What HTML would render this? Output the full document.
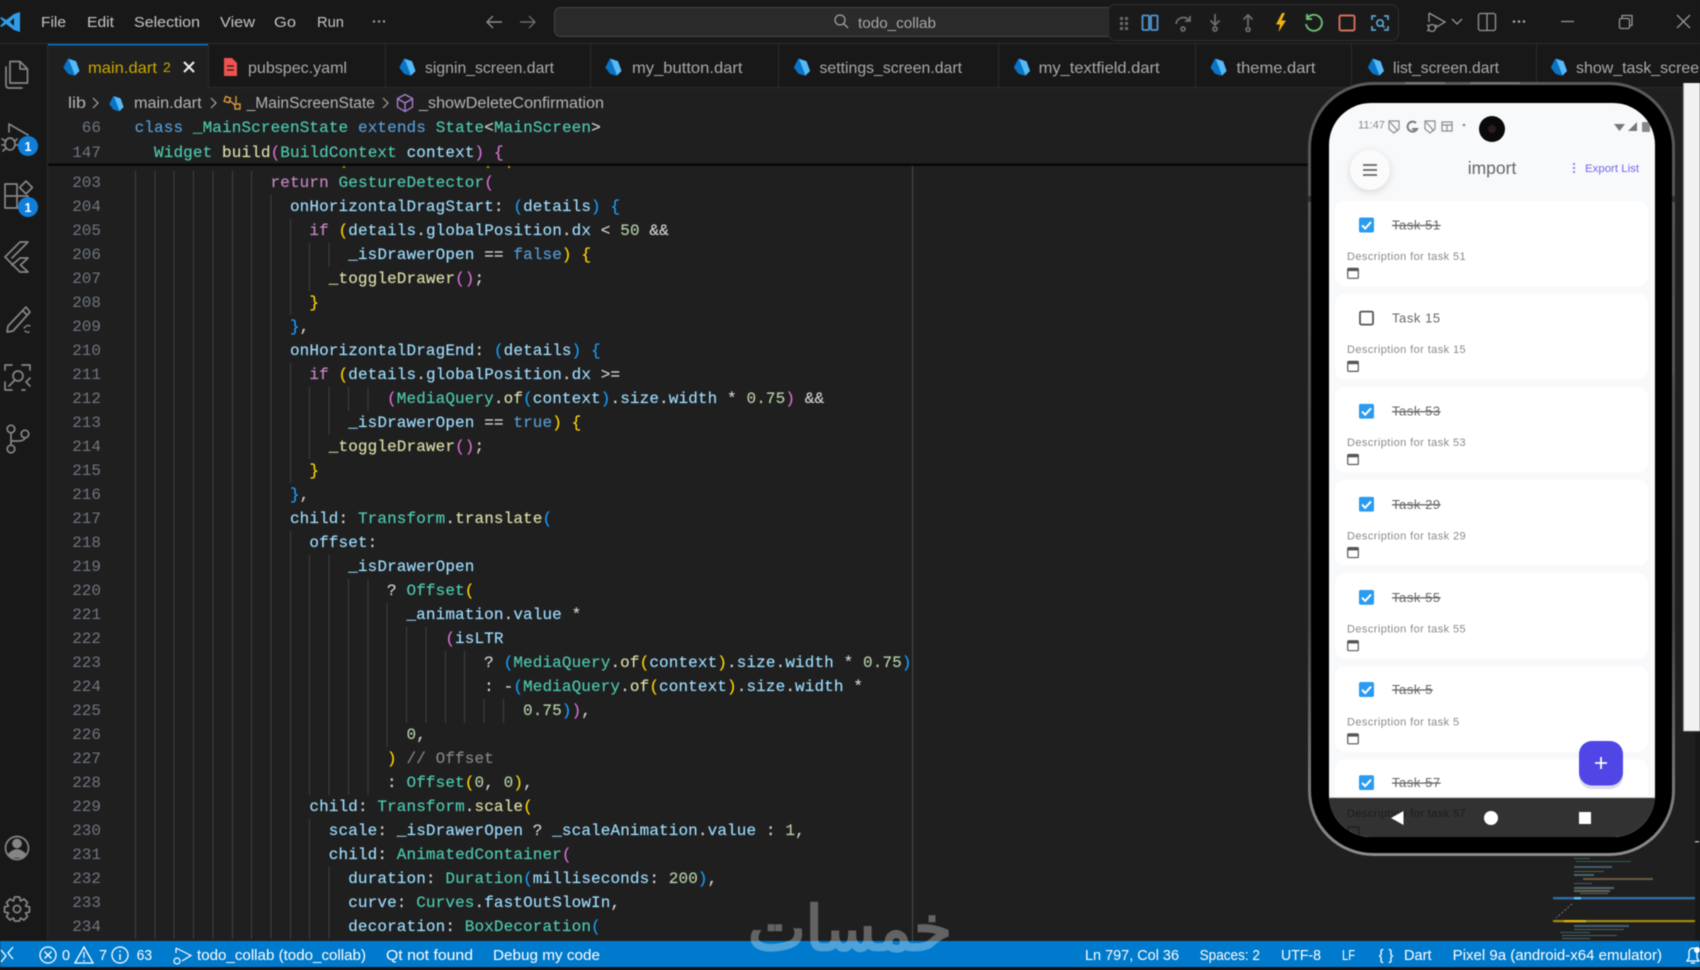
<!DOCTYPE html>
<html lang="en"><head><meta charset="utf-8"><title>todo_collab</title>
<style>
html,body{margin:0;padding:0;background:#1f1f1f;width:1700px;height:970px;overflow:hidden}
#w{position:relative;width:1700px;height:970px;overflow:hidden;filter:blur(.45px);background:#1f1f1f}
#code{position:absolute;left:0;top:166px;width:1700px;height:775px;overflow:hidden}
.l,.s{position:absolute;left:0;height:24px;line-height:24px;white-space:pre;font:16px/24px "Liberation Mono",monospace;letter-spacing:.11px;color:#ccc;width:1300px;-webkit-text-stroke:.15px}
.l b,.s b{font-weight:400;position:absolute;left:60px;width:41px;text-align:right;color:#6e7681;letter-spacing:0;-webkit-text-stroke:0}
.l i{position:absolute;left:134.6px;top:0;height:24px;width:calc(var(--c)*9.68px);background:repeating-linear-gradient(90deg,#3f3f3f 0 1px,transparent 1px 19.36px)}
.l u,.s u{text-decoration:none;position:absolute;top:0;left:calc(134.6px + var(--c)*9.71px)}
.k{color:#c586c0}.d{color:#569cd6}.t{color:#4ec9b0}.v{color:#9cdcfe}.f{color:#dcdcaa}.n{color:#b5cea8}.g{color:#ffd700}.p{color:#da70d6}.a{color:#179fff}.o{color:#d4d4d4}.c{color:#858585}
svg{position:absolute;left:0;top:0}
svg text{font-family:"Liberation Sans",sans-serif}
.m{font-size:15px;fill:#c4c4c4}
.tb{font-size:16px;fill:#a9a9a9}
.bc{font-size:15.5px;fill:#b4b4b4}
.st{font-size:14.5px;fill:#fff}
.ti{font-size:13px;fill:#666;letter-spacing:.55px}
.de{font-size:11px;fill:#8a8a8a;letter-spacing:.42px}
</style></head><body><div id="w">

<div class="s" style="top:116px;--c:0"><b>66</b><u><span class="d">class</span> <span class="t">_MainScreenState</span> <span class="d">extends</span> <span class="t">State</span><span class="o">&lt;</span><span class="t">MainScreen</span><span class="o">&gt;</span></u></div>
<div class="s" style="top:141px;--c:2"><b>147</b><u><span class="t">Widget</span> <span class="f">build</span><span class="p">(</span><span class="t">BuildContext</span> <span class="v">context</span><span class="p">)</span> <span class="p">{</span></u></div>

<div id="code">
<div class="l" style="top:4.7px;--c:14"><b>203</b><i></i><u><span class="k">return</span> <span class="t">GestureDetector</span><span class="p">(</span></u></div>
<div class="l" style="top:28.7px;--c:16"><b>204</b><i></i><u><span class="v">onHorizontalDragStart</span><span class="o">:</span> <span class="a">(</span><span class="v">details</span><span class="a">)</span> <span class="a">{</span></u></div>
<div class="l" style="top:52.7px;--c:18"><b>205</b><i></i><u><span class="k">if</span> <span class="g">(</span><span class="v">details</span><span class="o">.</span><span class="v">globalPosition</span><span class="o">.</span><span class="v">dx</span> <span class="o">&lt;</span> <span class="n">50</span> <span class="o">&amp;&amp;</span></u></div>
<div class="l" style="top:76.7px;--c:22"><b>206</b><i></i><u><span class="v">_isDrawerOpen</span> <span class="o">==</span> <span class="d">false</span><span class="g">)</span> <span class="g">{</span></u></div>
<div class="l" style="top:100.7px;--c:20"><b>207</b><i></i><u><span class="f">_toggleDrawer</span><span class="p">()</span><span class="o">;</span></u></div>
<div class="l" style="top:124.7px;--c:18"><b>208</b><i></i><u><span class="g">}</span></u></div>
<div class="l" style="top:148.7px;--c:16"><b>209</b><i></i><u><span class="a">}</span><span class="o">,</span></u></div>
<div class="l" style="top:172.7px;--c:16"><b>210</b><i></i><u><span class="v">onHorizontalDragEnd</span><span class="o">:</span> <span class="a">(</span><span class="v">details</span><span class="a">)</span> <span class="a">{</span></u></div>
<div class="l" style="top:196.7px;--c:18"><b>211</b><i></i><u><span class="k">if</span> <span class="g">(</span><span class="v">details</span><span class="o">.</span><span class="v">globalPosition</span><span class="o">.</span><span class="v">dx</span> <span class="o">&gt;=</span></u></div>
<div class="l" style="top:220.7px;--c:26"><b>212</b><i></i><u><span class="p">(</span><span class="t">MediaQuery</span><span class="o">.</span><span class="f">of</span><span class="a">(</span><span class="v">context</span><span class="a">)</span><span class="o">.</span><span class="v">size</span><span class="o">.</span><span class="v">width</span> <span class="o">*</span> <span class="n">0.75</span><span class="p">)</span> <span class="o">&amp;&amp;</span></u></div>
<div class="l" style="top:244.7px;--c:22"><b>213</b><i></i><u><span class="v">_isDrawerOpen</span> <span class="o">==</span> <span class="d">true</span><span class="g">)</span> <span class="g">{</span></u></div>
<div class="l" style="top:268.7px;--c:20"><b>214</b><i></i><u><span class="f">_toggleDrawer</span><span class="p">()</span><span class="o">;</span></u></div>
<div class="l" style="top:292.7px;--c:18"><b>215</b><i></i><u><span class="g">}</span></u></div>
<div class="l" style="top:316.7px;--c:16"><b>216</b><i></i><u><span class="a">}</span><span class="o">,</span></u></div>
<div class="l" style="top:340.7px;--c:16"><b>217</b><i></i><u><span class="v">child</span><span class="o">:</span> <span class="t">Transform</span><span class="o">.</span><span class="f">translate</span><span class="a">(</span></u></div>
<div class="l" style="top:364.7px;--c:18"><b>218</b><i></i><u><span class="v">offset</span><span class="o">:</span></u></div>
<div class="l" style="top:388.7px;--c:22"><b>219</b><i></i><u><span class="v">_isDrawerOpen</span></u></div>
<div class="l" style="top:412.7px;--c:26"><b>220</b><i></i><u><span class="o">?</span> <span class="t">Offset</span><span class="g">(</span></u></div>
<div class="l" style="top:436.7px;--c:28"><b>221</b><i></i><u><span class="v">_animation</span><span class="o">.</span><span class="v">value</span> <span class="o">*</span></u></div>
<div class="l" style="top:460.7px;--c:32"><b>222</b><i></i><u><span class="p">(</span><span class="v">isLTR</span></u></div>
<div class="l" style="top:484.7px;--c:36"><b>223</b><i></i><u><span class="o">?</span> <span class="a">(</span><span class="t">MediaQuery</span><span class="o">.</span><span class="f">of</span><span class="g">(</span><span class="v">context</span><span class="g">)</span><span class="o">.</span><span class="v">size</span><span class="o">.</span><span class="v">width</span> <span class="o">*</span> <span class="n">0.75</span><span class="a">)</span></u></div>
<div class="l" style="top:508.7px;--c:36"><b>224</b><i></i><u><span class="o">:</span> <span class="o">-</span><span class="a">(</span><span class="t">MediaQuery</span><span class="o">.</span><span class="f">of</span><span class="g">(</span><span class="v">context</span><span class="g">)</span><span class="o">.</span><span class="v">size</span><span class="o">.</span><span class="v">width</span> <span class="o">*</span></u></div>
<div class="l" style="top:532.7px;--c:40"><b>225</b><i></i><u><span class="n">0.75</span><span class="a">)</span><span class="p">)</span><span class="o">,</span></u></div>
<div class="l" style="top:556.7px;--c:28"><b>226</b><i></i><u><span class="n">0</span><span class="o">,</span></u></div>
<div class="l" style="top:580.7px;--c:26"><b>227</b><i></i><u><span class="g">)</span> <span class="c">// Offset</span></u></div>
<div class="l" style="top:604.7px;--c:26"><b>228</b><i></i><u><span class="o">:</span> <span class="t">Offset</span><span class="g">(</span><span class="n">0</span><span class="o">,</span> <span class="n">0</span><span class="g">)</span><span class="o">,</span></u></div>
<div class="l" style="top:628.7px;--c:18"><b>229</b><i></i><u><span class="v">child</span><span class="o">:</span> <span class="t">Transform</span><span class="o">.</span><span class="f">scale</span><span class="g">(</span></u></div>
<div class="l" style="top:652.7px;--c:20"><b>230</b><i></i><u><span class="v">scale</span><span class="o">:</span> <span class="v">_isDrawerOpen</span> <span class="o">?</span> <span class="v">_scaleAnimation</span><span class="o">.</span><span class="v">value</span> <span class="o">:</span> <span class="n">1</span><span class="o">,</span></u></div>
<div class="l" style="top:676.7px;--c:20"><b>231</b><i></i><u><span class="v">child</span><span class="o">:</span> <span class="t">AnimatedContainer</span><span class="p">(</span></u></div>
<div class="l" style="top:700.7px;--c:22"><b>232</b><i></i><u><span class="v">duration</span><span class="o">:</span> <span class="t">Duration</span><span class="a">(</span><span class="v">milliseconds</span><span class="o">:</span> <span class="n">200</span><span class="a">)</span><span class="o">,</span></u></div>
<div class="l" style="top:724.7px;--c:22"><b>233</b><i></i><u><span class="v">curve</span><span class="o">:</span> <span class="t">Curves</span><span class="o">.</span><span class="v">fastOutSlowIn</span><span class="o">,</span></u></div>
<div class="l" style="top:748.7px;--c:22"><b>234</b><i></i><u><span class="v">decoration</span><span class="o">:</span> <span class="t">BoxDecoration</span><span class="a">(</span></u></div>
</div>

<svg width="1700" height="970" viewBox="0 0 1700 970" xmlns="http://www.w3.org/2000/svg">
<defs>
<symbol id="dart" viewBox="0 0 18 18" overflow="visible">
<path d="M5.5 0.5 L13.5 3.2 L17 13 L12 17.8 L5.5 15.8 L0.8 9.5 Z" fill="#0a74c4"/>
<path d="M6 0.8 L13.5 3.2 L17 13 L12.5 17.5 Z" fill="#57b9f5"/>
</symbol>
<clipPath id="scr"><rect x="1329" y="103" width="326" height="734" rx="42"/></clipPath>
<linearGradient id="fr" x1="0" y1="0" x2="0" y2="1"><stop offset="0" stop-color="#5a5a5a"/><stop offset=".7" stop-color="#444"/><stop offset="1" stop-color="#8c8c8c"/></linearGradient>
<symbol id="chk" viewBox="0 0 15 15"><rect x="0" y="0" width="15" height="15" rx="2" fill="#2b9bf0"/><path d="M3 7.8 L6.2 11 L12 4.6" fill="none" stroke="#fff" stroke-width="2"/></symbol>
<symbol id="cal" viewBox="0 0 12 12"><rect x=".7" y="1.3" width="10.6" height="10" rx="1" fill="none" stroke="#555" stroke-width="1.2"/><rect x=".7" y="1.3" width="10.6" height="2.8" fill="#555"/></symbol>
</defs>

<!-- vertical ruler -->
<line x1="912.5" y1="166" x2="912.5" y2="941" stroke="#4a4a4a"/>
<!-- sticky shadow -->
<rect x="48" y="163.5" width="1260" height="2.5" fill="#070707"/>
<g fill="#b8960a"><rect x="343" y="166" width="2" height="2"/><rect x="487" y="166" width="2" height="2"/><rect x="508" y="166" width="2" height="2"/></g>

<!-- title bar -->
<rect x="0" y="0" width="1700" height="43" fill="#181818"/>
<rect x="0" y="43" width="1700" height="1" fill="#2b2b2b"/>
<path d="M14 14 L20 12 V32 L14 30 L6 24 L1.5 27 L0 26 L4 22 L0 18 L1.5 17 L6 20 Z M14 18 L10 22 L14 26 Z" fill="#2f9de6" fill-rule="evenodd"/>
<text class="m" x="41" y="27" textLength="25" lengthAdjust="spacingAndGlyphs">File</text>
<text class="m" x="87" y="27" textLength="27" lengthAdjust="spacingAndGlyphs">Edit</text>
<text class="m" x="134" y="27" textLength="66" lengthAdjust="spacingAndGlyphs">Selection</text>
<text class="m" x="220" y="27" textLength="35" lengthAdjust="spacingAndGlyphs">View</text>
<text class="m" x="274" y="27" textLength="22" lengthAdjust="spacingAndGlyphs">Go</text>
<text class="m" x="317" y="27" textLength="27" lengthAdjust="spacingAndGlyphs">Run</text>
<g fill="#a0a0a0"><circle cx="374" cy="21.5" r="1.2"/><circle cx="379" cy="21.5" r="1.2"/><circle cx="384" cy="21.5" r="1.2"/></g>
<path d="M487 22 H502 M493 16 L487 22 L493 28" fill="none" stroke="#8c8c8c" stroke-width="1.4"/>
<path d="M520 22 H535 M529 16 L535 22 L529 28" fill="none" stroke="#6a6a6a" stroke-width="1.4"/>
<rect x="554.5" y="7.5" width="570" height="29" rx="6" fill="#2a2a2a" stroke="#444"/>
<circle cx="840" cy="20" r="5" fill="none" stroke="#a0a0a0" stroke-width="1.3"/><path d="M844 24 L848 28" stroke="#a0a0a0" stroke-width="1.3"/>
<text x="858" y="28" font-size="15" fill="#a8a8a8" textLength="78" lengthAdjust="spacingAndGlyphs">todo_collab</text>

<!-- debug toolbar -->
<rect x="1108.5" y="4.5" width="290" height="36" rx="7" fill="#1a1a1a" stroke="#2f2f2f"/>
<g fill="#6a6a6a"><rect x="1120" y="17" width="3" height="3"/><rect x="1125" y="17" width="3" height="3"/><rect x="1120" y="22" width="3" height="3"/><rect x="1125" y="22" width="3" height="3"/><rect x="1120" y="27" width="3" height="3"/><rect x="1125" y="27" width="3" height="3"/></g>
<g fill="none" stroke="#4f96d1" stroke-width="1.8"><rect x="1142.5" y="15.5" width="6.5" height="14.5" rx="1"/><rect x="1151" y="15.5" width="6.5" height="14.5" rx="1"/></g>
<g fill="none" stroke="#707070" stroke-width="1.7">
<path d="M1176 24 A7.5 7.5 0 0 1 1189 20"/><path d="M1190 16 V21 H1185"/><circle cx="1183" cy="29" r="2"/>
<path d="M1215 14 V25 M1210.5 20.5 L1215 25 L1219.5 20.5"/><circle cx="1215" cy="29" r="2"/>
<path d="M1248 26 V15 M1243.5 19.5 L1248 15 L1252.5 19.5"/><circle cx="1248" cy="29.5" r="2"/>
</g>
<path d="M1282 13 L1276 24.5 H1280 L1278.5 32 L1286 20.5 H1281.5 L1285 13 Z" fill="#edb211"/>
<path d="M1307.5 18 A8 8 0 1 1 1306 24" fill="none" stroke="#6cbf74" stroke-width="1.9"/><path d="M1307 14 V19 H1312" fill="none" stroke="#6cbf74" stroke-width="1.9"/>
<rect x="1339.5" y="15.5" width="15" height="15" rx="1.5" fill="none" stroke="#cf7058" stroke-width="1.9"/>
<g fill="none" stroke="#5ba3cf" stroke-width="1.7"><path d="M1372 20 V16 H1376 M1384 16 H1388 V20 M1372 26 V30 H1376 M1384 30 H1388 V26"/><circle cx="1380" cy="23" r="3.2"/><path d="M1382 25 L1384.5 27.5"/></g>

<!-- right title icons -->
<g fill="none" stroke="#959595" stroke-width="1.3">
<path d="M1429 13 L1445 22 L1435 28 M1429 13 V22"/><circle cx="1432" cy="28" r="3.5"/><path d="M1427 25 L1429 26 M1427 31 L1429 30 M1437 25 L1435 26"/>
<path d="M1452 19 L1457 24 L1462 19"/>
<rect x="1478.5" y="13.5" width="17" height="17" rx="2"/><line x1="1487" y1="14" x2="1487" y2="30"/>
<line x1="1561" y1="21.5" x2="1574" y2="21.5"/>
<rect x="1619.5" y="18.5" width="10" height="10" rx="1.5"/><path d="M1622 18 V15.5 H1632 V25.5 H1630"/>
<path d="M1677 15 L1690 28 M1690 15 L1677 28"/>
</g>
<g fill="#a5a5a5"><circle cx="1514" cy="21.5" r="1.3"/><circle cx="1519" cy="21.5" r="1.3"/><circle cx="1524" cy="21.5" r="1.3"/></g>

<!-- tab bar -->
<rect x="0" y="44" width="1700" height="43" fill="#181818"/>
<rect x="48" y="44" width="160" height="43" fill="#1f1f1f"/>
<rect x="48" y="44" width="160" height="1.4" fill="#0078d4"/>
<rect x="208" y="87" width="1492" height="1" fill="#2b2b2b"/>
<g fill="#2b2b2b"><rect x="208" y="44" width="1" height="43"/><rect x="385" y="44" width="1" height="43"/><rect x="590" y="44" width="1" height="43"/><rect x="778" y="44" width="1" height="43"/><rect x="998" y="44" width="1" height="43"/><rect x="1195" y="44" width="1" height="43"/><rect x="1351" y="44" width="1" height="43"/><rect x="1536" y="44" width="1" height="43"/></g>
<use href="#dart" x="62.5" y="58" width="18" height="18"/>
<text class="tb" x="88" y="73" style="fill:#cca700" textLength="69" lengthAdjust="spacingAndGlyphs">main.dart</text>
<text class="tb" x="163" y="72" style="fill:#cca700;font-size:14px">2</text>
<path d="M184 62 L194 72 M194 62 L184 72" stroke="#f0f0f0" stroke-width="2" fill="none"/>
<path d="M224 58 H232 L237 63 V76 H224 Z" fill="#ef5350"/><path d="M227 66 H234 M227 70 H234" stroke="#1f1f1f" stroke-width="1.3"/>
<text class="tb" x="248" y="73" textLength="99" lengthAdjust="spacingAndGlyphs">pubspec.yaml</text>
<use href="#dart" x="398.5" y="58" width="18" height="18"/>
<text class="tb" x="425" y="73" textLength="129" lengthAdjust="spacingAndGlyphs">signin_screen.dart</text>
<use href="#dart" x="604.5" y="58" width="18" height="18"/>
<text class="tb" x="632" y="73" textLength="110.5" lengthAdjust="spacingAndGlyphs">my_button.dart</text>
<use href="#dart" x="793" y="58" width="18" height="18"/>
<text class="tb" x="819.5" y="73" textLength="142.5" lengthAdjust="spacingAndGlyphs">settings_screen.dart</text>
<use href="#dart" x="1013" y="58" width="18" height="18"/>
<text class="tb" x="1038.6" y="73" textLength="121" lengthAdjust="spacingAndGlyphs">my_textfield.dart</text>
<use href="#dart" x="1209.6" y="58" width="18" height="18"/>
<text class="tb" x="1236.5" y="73" textLength="79" lengthAdjust="spacingAndGlyphs">theme.dart</text>
<use href="#dart" x="1367" y="58" width="18" height="18"/>
<text class="tb" x="1393" y="73" textLength="106" lengthAdjust="spacingAndGlyphs">list_screen.dart</text>
<use href="#dart" x="1550" y="58" width="18" height="18"/>
<text class="tb" x="1576" y="73" textLength="132" lengthAdjust="spacingAndGlyphs">show_task_screen</text>

<!-- breadcrumbs -->
<text class="bc" x="68" y="108" textLength="18" lengthAdjust="spacingAndGlyphs">lib</text>
<path d="M93 98 L98 103 L93 108" fill="none" stroke="#a8a8a8" stroke-width="1.2"/>
<use href="#dart" x="108.5" y="95" width="16" height="17"/>
<text class="bc" x="134" y="108" textLength="67.6" lengthAdjust="spacingAndGlyphs">main.dart</text>
<path d="M211 98 L216 103 L211 108" fill="none" stroke="#a8a8a8" stroke-width="1.2"/>
<g fill="none" stroke="#e8a33d" stroke-width="1.3"><rect x="225" y="97" width="5" height="5" transform="rotate(20 227 99)"/><rect x="235" y="104" width="5" height="5"/><path d="M230 101 L235 105 M236 96 V103"/></g>
<text class="bc" x="246.6" y="108" textLength="128.4" lengthAdjust="spacingAndGlyphs">_MainScreenState</text>
<path d="M383 98 L388 103 L383 108" fill="none" stroke="#a8a8a8" stroke-width="1.2"/>
<path d="M405 94.5 L412.5 98.5 V107 L405 111.5 L397.5 107 V98.5 Z M398 99 L405 103 L412 99 M405 103 V111" fill="none" stroke="#b180d7" stroke-width="1.3"/>
<text class="bc" x="419" y="108" textLength="185" lengthAdjust="spacingAndGlyphs">_showDeleteConfirmation</text>

<!-- activity bar -->
<rect x="0" y="44" width="47" height="897" fill="#181818"/>
<rect x="47" y="44" width="1" height="897" fill="#2b2b2b"/>
<g fill="none" stroke="#858585" stroke-width="1.7" stroke-linejoin="round" stroke-linecap="round">
<path d="M10 61.5 H20 L27.5 69 V83 H10 Z M20 62 V69 H27"/><path d="M6 67 V85 Q6 88 9 88 H22"/>
<path d="M9 124 L28 135 M9 124 V132"/><ellipse cx="10" cy="144" rx="5" ry="6"/><path d="M2 139 L6 141 M2 145 H5 M3 151 L6 148 M15 141 L17 139 M15 145 H18"/>
<path d="M5 184 H17 V208 H5 Z M5 196 H28 V208 H17"/><rect x="21.5" y="183" width="9" height="9" transform="rotate(45 26 187.5)"/>
<path d="M20 242 H28 L12 258 M20 242 L5 257 L20 272 H28 L20.5 265 L28 258 H20 L12 265"/>
<path d="M26 307 L8 326 L7 332 L13 331 L30 312 Z M23 311 L27 315"/><path d="M24 328 Q28 324 30 326 M25 331 Q27 333 29 332" stroke-width="1.4"/>
<path d="M5 370 V365 H12 M22 365 H30 V370 M5 382 V390 H12 M22 390 H25"/><circle cx="18" cy="376" r="5"/><path d="M14 381 L9 386 M30 378 L26 382 L30 386"/>
<circle cx="11" cy="429" r="3.8"/><circle cx="11" cy="449" r="3.8"/><circle cx="25" cy="434" r="3.8"/><path d="M11 433 V445 M25 438 Q24 441 18 441 H11"/>
<circle cx="17" cy="848" r="11.5"/><circle cx="17" cy="843.5" r="4" fill="#858585"/><path d="M9 854 Q17 846 25 854 L22 857 H12 Z" fill="#858585"/>
<path d="M14.5 897 H19.5 L20.5 901 L24 899 L27.5 902.5 L25.5 906 L29.5 907 V912 L25.5 913 L27.5 916.5 L24 920 L20.5 918 L19.5 921 H14.5 L13.5 918 L10 920 L6.5 916.5 L8.5 913 L4.5 912 V907 L8.5 906 L6.5 902.5 L10 899 L13.5 901 Z"/><circle cx="17" cy="909" r="3.6"/>
</g>
<circle cx="28" cy="146" r="10" fill="#0f7fd9"/><text x="28" y="151" font-size="12.5" fill="#fff" text-anchor="middle" font-weight="700">1</text>
<circle cx="28" cy="207" r="10" fill="#0f7fd9"/><text x="28" y="212" font-size="12.5" fill="#fff" text-anchor="middle" font-weight="700">1</text>

<!-- white panel right of phone -->
<rect x="1683" y="83" width="17" height="649" fill="#f1f1f1"/>
<rect x="1683" y="83" width="1" height="649" fill="#999"/>
<rect x="1683" y="731" width="17" height="1" fill="#444"/>

<!-- minimap -->
<rect x="1695" y="732" width="5" height="208" fill="#181818"/>
<rect x="1695" y="841" width="4" height="1.5" fill="#aaa"/>
<g opacity=".55">
<rect x="1574" y="858" width="16" height="1" fill="#6a8f5a"/><rect x="1576" y="861" width="55" height="1" fill="#4d8f6a"/>
<rect x="1574" y="866" width="38" height="2" fill="#5e8fb5"/>
<rect x="1574" y="871" width="30" height="1" fill="#8f8f5a"/><rect x="1574" y="874" width="20" height="2" fill="#6c9ab8"/>
<rect x="1583" y="878" width="70" height="2" fill="#a98d60"/>
<rect x="1574" y="883" width="18" height="1" fill="#5e8fb5"/><rect x="1574" y="887" width="40" height="2" fill="#7da0b5"/><rect x="1574" y="890" width="36" height="2" fill="#a0a46f"/><rect x="1580" y="893" width="28" height="1" fill="#8fa0a0"/>
<rect x="1574" y="925" width="55" height="2" fill="#5e8fb5"/><rect x="1574" y="929" width="50" height="1" fill="#6f9f8f"/><rect x="1560" y="932" width="30" height="1" fill="#5e8fb5"/><rect x="1562" y="935" width="55" height="1" fill="#6f9f8f"/><rect x="1562" y="938" width="28" height="1" fill="#7da0b5"/>
</g>
<rect x="1553" y="897" width="142" height="2.4" fill="#2f6ea6"/><rect x="1574" y="897" width="7" height="2.4" fill="#5cc0ff"/>
<rect x="1553" y="920" width="142" height="2.2" fill="#a58b10"/><rect x="1564" y="920" width="22" height="2.2" fill="#e0b010"/>
<path d="M1572 904 L1556 918" stroke="#777" stroke-width="1" stroke-dasharray="2 2"/>

<!-- phone -->
<rect x="1309.5" y="83.5" width="364" height="771" rx="64" fill="#000" stroke="url(#fr)" stroke-width="3"/>
<rect x="1405" y="82" width="40" height="2" fill="#777"/><rect x="1470" y="82" width="50" height="2" fill="#777"/>
<rect x="1308" y="196" width="3" height="6" fill="#333"/><rect x="1672" y="196" width="3" height="6" fill="#333"/>
<rect x="1672" y="295" width="3" height="80" fill="#555"/>
<g clip-path="url(#scr)">
<rect x="1329" y="103" width="326" height="734" fill="#f8f9fb"/>
<!-- cards -->
<rect x="1335" y="200.7" width="313" height="85.5" rx="10" fill="#fff"/>
<rect x="1335" y="293.8" width="313" height="85.5" rx="10" fill="#fff"/>
<rect x="1335" y="386.9" width="313" height="85.5" rx="10" fill="#fff"/>
<rect x="1335" y="480" width="313" height="85.5" rx="10" fill="#fff"/>
<rect x="1335" y="573.1" width="313" height="85.5" rx="10" fill="#fff"/>
<rect x="1335" y="666.2" width="313" height="85.5" rx="10" fill="#fff"/>
<rect x="1335" y="759.3" width="313" height="85.5" rx="10" fill="#fff"/>

<use href="#chk" x="1359" y="217.5" width="15" height="15"/>
<rect x="1360" y="311.6" width="13" height="13" rx="1.5" fill="none" stroke="#555" stroke-width="1.8"/>
<use href="#chk" x="1359" y="403.7" width="15" height="15"/>
<use href="#chk" x="1359" y="496.8" width="15" height="15"/>
<use href="#chk" x="1359" y="589.9" width="15" height="15"/>
<use href="#chk" x="1359" y="682" width="15" height="15"/>
<use href="#chk" x="1359" y="775.1" width="15" height="15"/>

<text class="ti" x="1392" y="229.5" text-decoration="line-through">Task 51</text>
<text class="ti" x="1392" y="322.6">Task 15</text>
<text class="ti" x="1392" y="415.7" text-decoration="line-through">Task 53</text>
<text class="ti" x="1392" y="508.8" text-decoration="line-through">Task 29</text>
<text class="ti" x="1392" y="601.9" text-decoration="line-through">Task 55</text>
<text class="ti" x="1392" y="694" text-decoration="line-through">Task 5</text>
<text class="ti" x="1392" y="787.1" text-decoration="line-through">Task 57</text>

<text class="de" x="1347" y="260">Description for task 51</text>
<text class="de" x="1347" y="353.1">Description for task 15</text>
<text class="de" x="1347" y="446.2">Description for task 53</text>
<text class="de" x="1347" y="539.3">Description for task 29</text>
<text class="de" x="1347" y="632.4">Description for task 55</text>
<text class="de" x="1347" y="725.5">Description for task 5</text>

<use href="#cal" x="1347" y="267" width="12" height="12"/>
<use href="#cal" x="1347" y="360.1" width="12" height="12"/>
<use href="#cal" x="1347" y="453.2" width="12" height="12"/>
<use href="#cal" x="1347" y="546.3" width="12" height="12"/>
<use href="#cal" x="1347" y="639.4" width="12" height="12"/>
<use href="#cal" x="1347" y="732.5" width="12" height="12"/>

<!-- header -->
<circle cx="1370" cy="170" r="20" fill="#fbfbfc" style="filter:drop-shadow(0 2px 4px rgba(0,0,0,.14))"/>
<path d="M1363 165 H1377 M1363 170 H1377 M1363 175 H1377" stroke="#666" stroke-width="1.8"/>
<text x="1492" y="174" font-size="17.5" fill="#666" text-anchor="middle">import</text>
<g fill="#6d68e6"><circle cx="1574" cy="164" r="1"/><circle cx="1574" cy="168" r="1"/><circle cx="1574" cy="172" r="1"/></g>
<text x="1585" y="172" font-size="11" fill="#6d68e6" textLength="54" lengthAdjust="spacingAndGlyphs">Export List</text>

<!-- phone status -->
<text x="1358" y="128.5" font-size="11" fill="#8a8a8a" textLength="27" lengthAdjust="spacingAndGlyphs">11:47</text>
<g fill="none" stroke="#8a8a8a" stroke-width="1.2"><path d="M1389 121 L1399 121 L1399 129 L1394 133 L1389 129 Z"/><path d="M1390 122 L1398 131"/><path d="M1425 121 L1435 121 L1435 129 L1430 133 L1425 129 Z"/><path d="M1426 122 L1434 131"/><rect x="1442" y="122" width="10" height="9"/><path d="M1442 125 H1452 M1447 125 V131"/></g>
<path d="M1416 123 A5 5 0 1 0 1417 129 H1412" fill="none" stroke="#7a7a7a" stroke-width="2"/>
<circle cx="1464" cy="125" r="1.3" fill="#8a8a8a"/>
<path d="M1614 124 H1625 L1619.5 131 Z" fill="#777"/><path d="M1637 122 V131 H1628 Z" fill="#777"/><rect x="1642" y="122" width="8" height="10" rx="1" fill="#888"/>
<circle cx="1492" cy="129" r="13" fill="#0a0a0a"/><circle cx="1492" cy="129" r="4" fill="#2a1c1c"/>

<!-- nav -->
<rect x="1329" y="798" width="326" height="39" fill="#323232"/>
<rect x="1329" y="797" width="326" height="1" fill="#d8d8d8"/>
<text x="1347" y="817" font-size="11" fill="#1c1c1c" letter-spacing=".42">Description for task 57</text>
<rect x="1348" y="827" width="11" height="11" rx="1" fill="none" stroke="#1c1c1c" stroke-width="1.2"/>
<path d="M1403.5 811 V825 L1391 818 Z" fill="#fff"/>
<circle cx="1491" cy="818" r="7" fill="#fff"/>
<rect x="1579" y="812" width="12" height="12" fill="#fff"/>

<!-- FAB -->
<rect x="1579" y="745" width="44" height="44" rx="13" fill="#9a98c8" opacity=".35"/>
<rect x="1579" y="741" width="44" height="44.5" rx="13" fill="#4f46e5"/>
<path d="M1601 757 V769 M1595 763 H1607" stroke="#fff" stroke-width="1.8"/>
</g>

<!-- status bar -->
<rect x="0" y="941" width="1700" height="26" fill="#007acc"/>
<rect x="0" y="967" width="1700" height="3" fill="#111"/>
<path d="M1 950 L6 956 L1 962 M13 947 L8 953 L13 959" fill="none" stroke="#fff" stroke-width="1.3"/>
<circle cx="48" cy="955" r="8" fill="none" stroke="#fff" stroke-width="1.3"/><path d="M44.5 951.5 L51.5 958.5 M51.5 951.5 L44.5 958.5" stroke="#fff" stroke-width="1.3"/>
<text class="st" x="62" y="960">0</text>
<path d="M84 947 L93 963 H75 Z M84 952 V958 M84 960 V961.5" fill="none" stroke="#fff" stroke-width="1.3"/>
<text class="st" x="99" y="960">7</text>
<circle cx="120" cy="955" r="8" fill="none" stroke="#fff" stroke-width="1.3"/><path d="M120 954 V960 M120 950.5 V952" stroke="#fff" stroke-width="1.4"/>
<text class="st" x="136.6" y="960" textLength="15.5" lengthAdjust="spacingAndGlyphs">63</text>
<path d="M176 948 L191 955.5 L182 961 M176 948 V953" fill="none" stroke="#fff" stroke-width="1.2"/><circle cx="177" cy="961" r="3" fill="none" stroke="#fff" stroke-width="1.2"/>
<text class="st" x="197" y="960" textLength="169" lengthAdjust="spacingAndGlyphs">todo_collab (todo_collab)</text>
<text class="st" x="386" y="960" textLength="87" lengthAdjust="spacingAndGlyphs">Qt not found</text>
<text class="st" x="493" y="960" textLength="107" lengthAdjust="spacingAndGlyphs">Debug my code</text>
<text class="st" x="1085" y="960" textLength="94" lengthAdjust="spacingAndGlyphs">Ln 797, Col 36</text>
<text class="st" x="1199.6" y="960" textLength="60.4" lengthAdjust="spacingAndGlyphs">Spaces: 2</text>
<text class="st" x="1281" y="960" textLength="40" lengthAdjust="spacingAndGlyphs">UTF-8</text>
<text class="st" x="1342" y="960" textLength="13" lengthAdjust="spacingAndGlyphs">LF</text>
<text class="st" x="1378.5" y="960" textLength="15" lengthAdjust="spacingAndGlyphs">{ }</text>
<text class="st" x="1404" y="960" textLength="27.6" lengthAdjust="spacingAndGlyphs">Dart</text>
<text class="st" x="1452.7" y="960" textLength="209.3" lengthAdjust="spacingAndGlyphs">Pixel 9a (android-x64 emulator)</text>
<path d="M1687 961 H1699 L1697 958 V952 A4 4 0 0 0 1689 952 V958 Z M1691 963 H1695" fill="none" stroke="#fff" stroke-width="1.3"/><circle cx="1697" cy="950" r="3" fill="#fff"/>

<!-- watermark -->
<text x="850" y="950" text-anchor="middle" direction="rtl" font-size="62" fill="#fff" stroke="#fff" stroke-width="2.4" opacity=".3" style="font-family:'DejaVu Sans',sans-serif" textLength="204" lengthAdjust="spacingAndGlyphs">خمسات</text>
</svg>
</div></body></html>
